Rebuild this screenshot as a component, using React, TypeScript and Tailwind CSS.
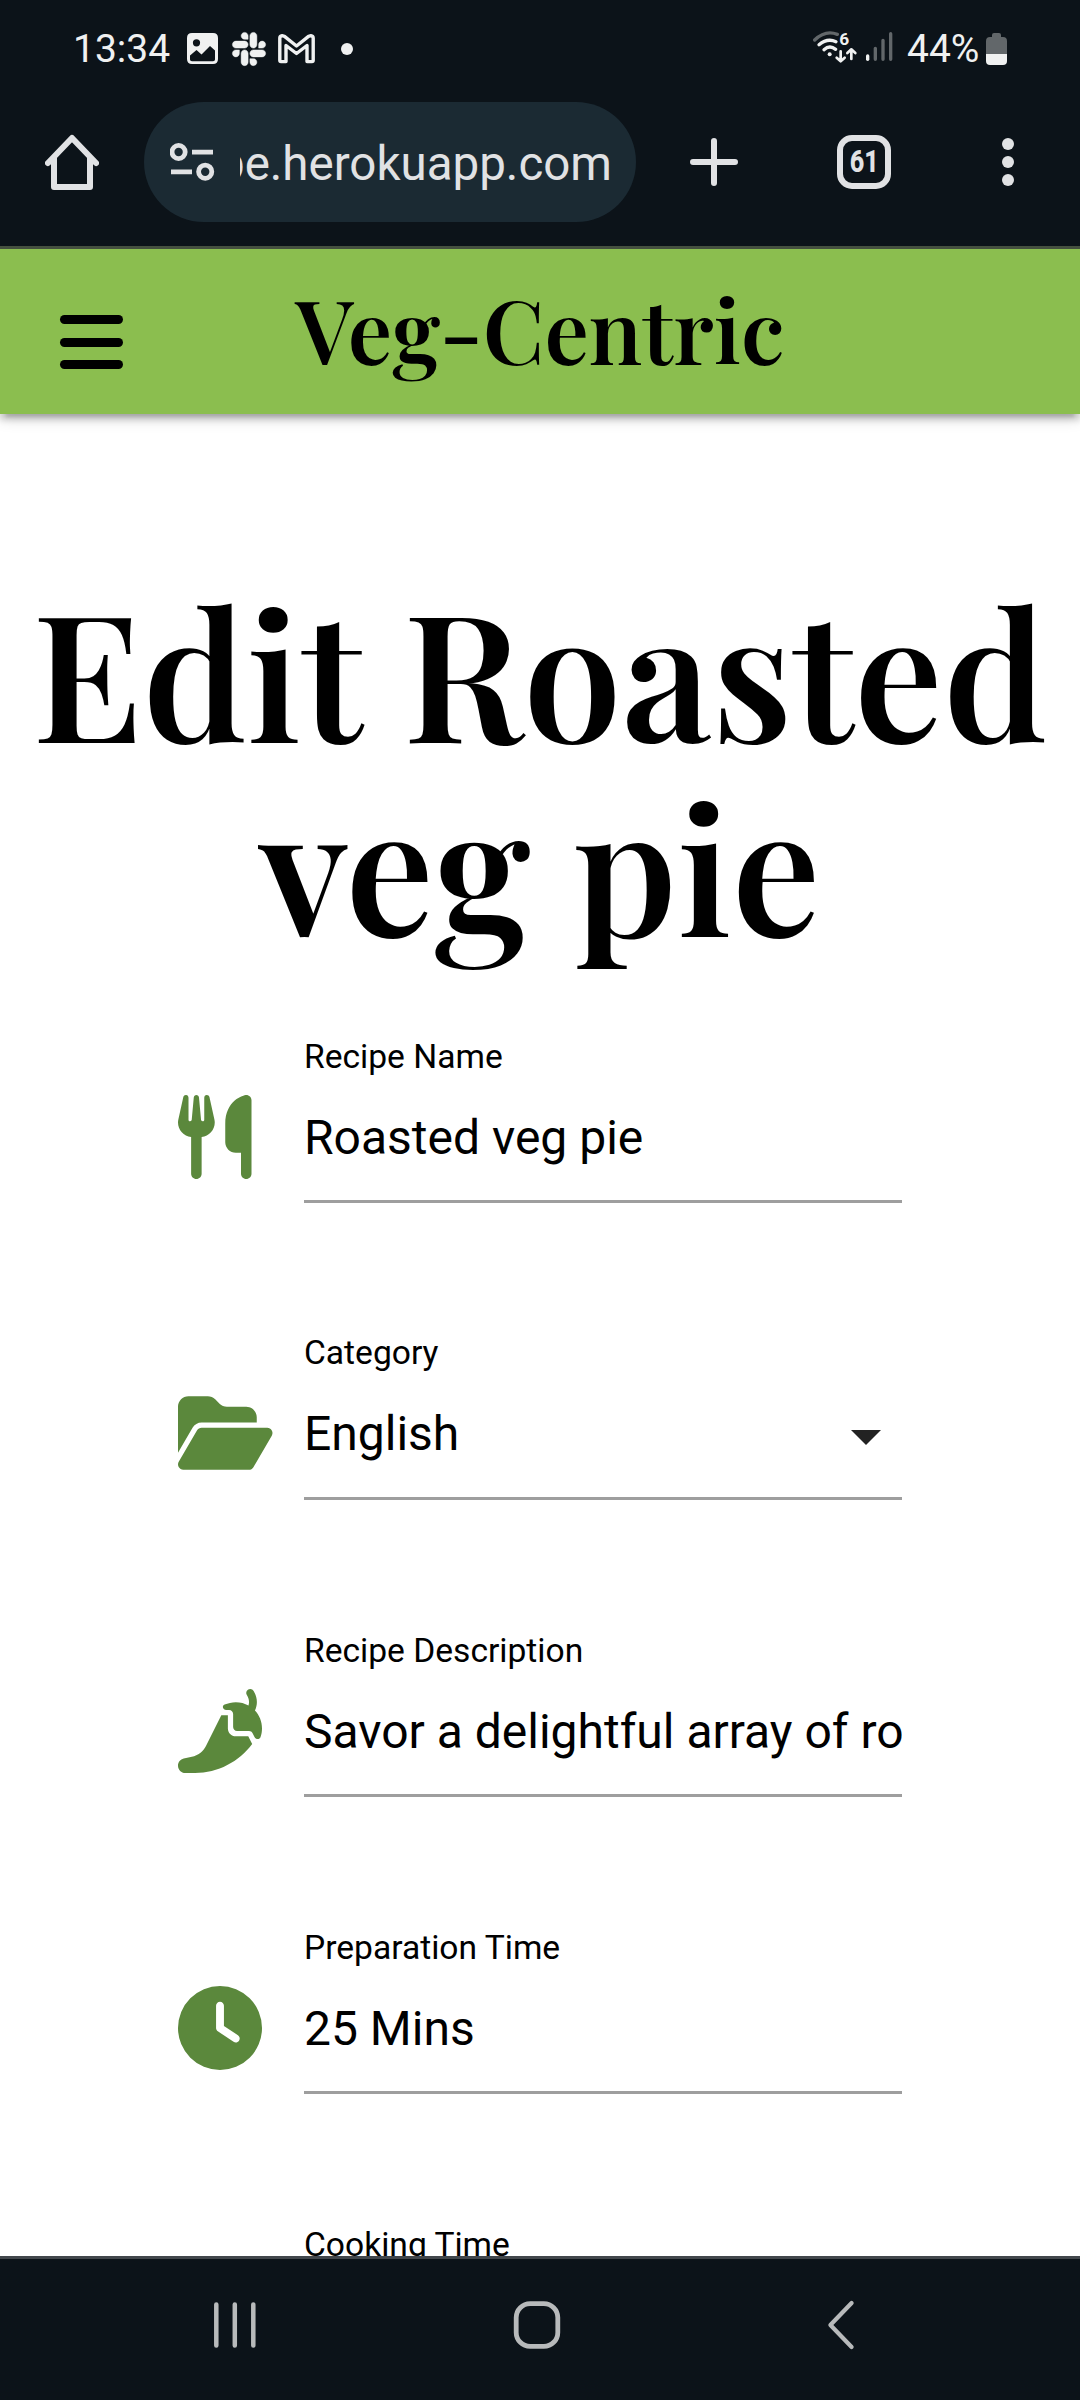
import type { ReactNode } from "react";
import { FaClock, FaFolderOpen, FaPepperHot, FaSlack, FaUtensils } from "react-icons/fa6";

function StatusBar() {
  return (
    <div className="flex h-[102px] shrink-0 items-start justify-between pl-[73px] pr-[73px] pt-[24px] text-[39px] leading-[48px] text-[#f0f1f1]">
      <div className="flex h-[49px] items-center">
        <span className="w-[114px]">13:34</span>
        <svg className="h-[31px] w-[31px]" viewBox="0 0 31 31">
          <path
            fill="currentColor"
            fillRule="evenodd"
            d="M5 0H26Q31 0 31 5V26Q31 31 26 31H5Q0 31 0 26V5Q0 0 5 0ZM9.5 6.2A3.6 3.6 0 1 0 9.5 13.4A3.6 3.6 0 1 0 9.5 6.2ZM3 22.5V26.5Q3 28.2 5 28.2H26Q28 28.2 28 26.5V17.5L23 13L14.5 21.5L9.5 17Z"
          />
        </svg>
        <FaSlack className="ml-[13px] h-[38px] w-[36px] stroke-current stroke-[6]" />
        <svg className="ml-[11px] h-[30px] w-[37px]" viewBox="0 0 37 30" fill="none" stroke="currentColor" strokeWidth="3.4" strokeLinejoin="round">
          <path d="M4 1.7Q1.8 1.9 1.8 4V26.3Q1.8 27.6 3 27.6H8V11.5L18.5 19.5L29 11.5V27.6H34Q35.2 27.6 35.2 26.3V4Q35.2 1.9 33 1.7L30.5 2.4L18.5 12L6.5 2.4Z" />
        </svg>
        <span className="ml-[26px] h-3 w-3 rounded-full bg-current" />
      </div>
      <div className="flex h-[49px] items-center">
        <svg className="h-[50px] w-[89px]" viewBox="25 0 267 150" fill="none" strokeWidth="10" strokeLinecap="round">
          <path stroke="#62676a" d="M30 48Q62 17 98 31" />
          <path stroke="#f0f1f1" d="M43 62Q68 41 94 53" />
          <path stroke="#f0f1f1" d="M58 77Q75 62 93 76" />
          <circle cx="75" cy="91" r="6" fill="#f0f1f1" />
          <text x="104" y="63" fill="#f0f1f1" fontSize="52" fontWeight="700" fontFamily="Roboto, sans-serif">
            6
          </text>
          <path stroke="#f0f1f1" strokeLinejoin="round" strokeWidth="8" d="M108 82V111M96 101L108 112L120 101M140 105V77M128 87L140 76L152 87" />
          <path stroke="#f0f1f1" d="M189 96V106" />
          <path stroke="#62676a" d="M212 73V106M235 49V106M258 29V106" />
        </svg>
        <span className="ml-[5px] w-[74px]">44%</span>
        <svg className="ml-[5px] h-[32px] w-[21px]" viewBox="0 0 21 32">
          <path fill="#62676a" d="M6 2Q6 0 8 0H13Q15 0 15 2V4H17Q21 4 21 8V21H0V8Q0 4 4 4H6Z" />
          <path fill="#f0f1f1" d="M0 21H21V28Q21 32 17 32H4Q0 32 0 28Z" />
        </svg>
      </div>
    </div>
  );
}

function BrowserBar() {
  return (
    <div className="flex h-[120px] shrink-0 items-center pl-[45px] text-[#e1e2e4]">
      <svg className="h-[56px] w-[54px]" viewBox="0 0 54 56" fill="none" stroke="currentColor" strokeWidth="6" strokeLinecap="round" strokeLinejoin="round">
        <path d="M3 29L27 4L51 29M9 24V53H45V24" />
      </svg>
      <div className="ml-[45px] flex h-[120px] w-[492px] items-center rounded-full bg-[#1b2a33] pl-[26px]">
        <svg className="h-[40px] w-[46px]" viewBox="0 0 46 40" fill="none" stroke="currentColor" strokeWidth="4.8">
          <circle cx="8.6" cy="10" r="6.6" />
          <circle cx="35.2" cy="29.7" r="6.6" />
          <path d="M22 10.2H43M1 29.9H22" />
        </svg>
        <div className="ml-[24px] mt-[3px] flex w-[372px] justify-end overflow-hidden whitespace-nowrap text-[47.5px] leading-[64px]">
          <span>pe.herokuapp.com</span>
        </div>
      </div>
      <svg className="ml-[54px] h-12 w-12" viewBox="0 0 48 48" stroke="currentColor" strokeWidth="6" strokeLinecap="round">
        <path d="M24 3V45M3 24H45" />
      </svg>
      <div className="ml-[99px] flex h-[54px] w-[54px] items-center justify-center rounded-[15px] border-[6px] border-current">
        <span className="scale-x-[0.8] text-[31.5px] font-extrabold leading-none">61</span>
      </div>
      <div className="ml-[111px] flex flex-col gap-[6px]">
        <span className="h-3 w-3 rounded-full bg-current" />
        <span className="h-3 w-3 rounded-full bg-current" />
        <span className="h-3 w-3 rounded-full bg-current" />
      </div>
    </div>
  );
}

function Field({ icon, label, value, select }: { icon: ReactNode; label: string; value?: string; select?: boolean }) {
  return (
    <div className="flex h-[297px] shrink-0 pl-[178px]">
      <div className={select ? "w-[126px] shrink-0 pt-[73.5px] text-[#5b883c]" : "w-[126px] shrink-0 pt-[74.5px] text-[#5b883c]"}>{icon}</div>
      <div className="w-[598px]">
        <div className={select ? "pt-[15px] text-[33.6px] leading-[41px]" : "pt-4 text-[33.6px] leading-[41px]"}>{label}</div>
        {value && (
          <div
            className={
              select
                ? "mt-[33px] flex h-[94px] items-start justify-between border-b-[3px] border-[#9e9e9e]"
                : "mt-[33px] flex h-[93px] items-start justify-between border-b-[3px] border-[#9e9e9e]"
            }
          >
            <div className="overflow-hidden whitespace-nowrap text-[48px] leading-[56px]">{value}</div>
            {select && (
              <svg className="mr-[21px] mt-[24px] h-[15px] w-[30px]" viewBox="0 0 30 15">
                <path fill="#222" d="M0 0H30L15 15Z" />
              </svg>
            )}
          </div>
        )}
      </div>
    </div>
  );
}

export default function App() {
  return (
    <div className="flex h-[2400px] w-[1080px] flex-col overflow-hidden bg-[#0c1319] font-['Roboto',sans-serif] text-black">
      <StatusBar />
      <BrowserBar />
      <div className="h-6 shrink-0" />
      <div className="h-[3px] shrink-0 bg-[#45503f]" />
      <div className="flex min-h-0 flex-1 flex-col overflow-hidden bg-white">
        <header className="relative flex h-[165px] shrink-0 items-start justify-center bg-[#8bbe4f] shadow-[0_6px_6px_0_rgba(0,0,0,0.14),0_9px_3px_-6px_rgba(0,0,0,0.12),0_3px_15px_0_rgba(0,0,0,0.2)]">
          <button aria-label="Menu" className="absolute left-[60px] top-[66px] flex w-[63px] flex-col gap-[13.5px]">
            <span className="h-[9px] rounded-full bg-black" />
            <span className="h-[9px] rounded-full bg-black" />
            <span className="h-[9px] rounded-full bg-black" />
          </button>
          <span className="-mt-[4px] font-['Playfair_Display','Liberation_Serif',serif] text-[88.2px] font-semibold leading-[168px]">
            Veg-Centric
          </span>
        </header>
        <h1 className="mb-[59px] mt-[159px] shrink-0 text-center font-['Playfair_Display','Liberation_Serif',serif] text-[176.4px] font-semibold leading-[194px]">
          Edit Roasted
          <br />
          veg pie
        </h1>
        <Field icon={<FaUtensils className="h-[84px] w-[73.5px]" />} label="Recipe Name" value="Roasted veg pie" />
        <Field icon={<FaFolderOpen className="h-[84px] w-[94.5px]" />} label="Category" value="English" select />
        <Field icon={<FaPepperHot className="h-[84px] w-[84px]" />} label="Recipe Description" value="Savor a delightful array of ro" />
        <Field icon={<FaClock className="h-[84px] w-[84px]" />} label="Preparation Time" value="25 Mins" />
        <Field icon={null} label="Cooking Time" />
      </div>
      <nav className="flex h-[144px] shrink-0 items-start border-t-[3px] border-[#42474c] bg-[#0c1319] pl-[213px] pt-[41px] text-[#b8babb]">
        <svg className="h-[50px] w-[43px]" viewBox="0 0 43 50" stroke="currentColor" strokeWidth="4.5" strokeLinecap="round">
          <path d="M3.3 4.5V45.5M21.8 4.5V45.5M40.3 4.5V45.5" />
        </svg>
        <svg className="ml-[257px] h-[50px] w-[48px]" viewBox="0 0 48 50" fill="none" stroke="currentColor" strokeWidth="4.8">
          <rect x="3.2" y="3.6" width="41.6" height="42.8" rx="14" />
        </svg>
        <svg className="ml-[266px] h-[50px] w-[28px]" viewBox="0 0 28 50" fill="none" stroke="currentColor" strokeWidth="4.2" strokeLinecap="round" strokeLinejoin="round">
          <path d="M24.6 3L3.4 25L24.6 47" />
        </svg>
      </nav>
    </div>
  );
}
